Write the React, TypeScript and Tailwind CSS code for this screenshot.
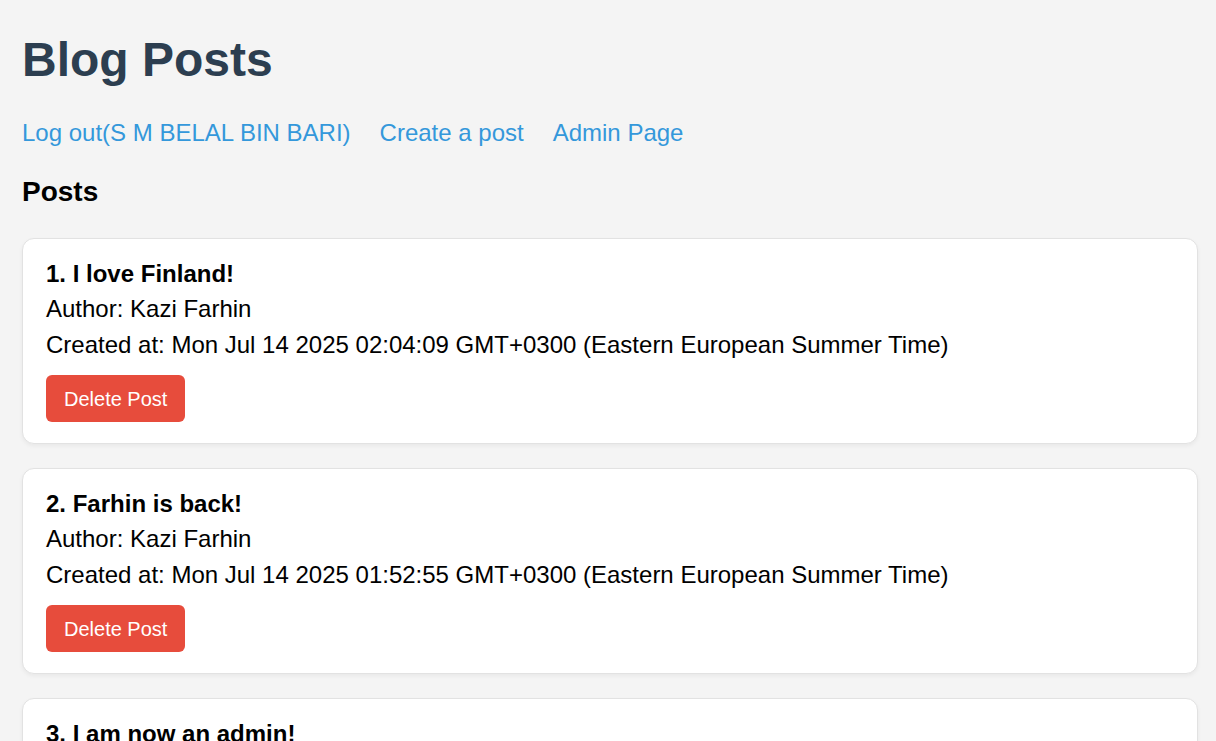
import React from "react";

const posts = [
  {
    id: 1,
    title: "I love Finland!",
    author: "Kazi Farhin",
    created: "Mon Jul 14 2025 02:04:09 GMT+0300 (Eastern European Summer Time)",
  },
  {
    id: 2,
    title: "Farhin is back!",
    author: "Kazi Farhin",
    created: "Mon Jul 14 2025 01:52:55 GMT+0300 (Eastern European Summer Time)",
  },
  {
    id: 3,
    title: "I am now an admin!",
    author: "S M Belal Bin Bari",
    created: "Mon Jul 14 2025 01:40:12 GMT+0300 (Eastern European Summer Time)",
  },
];

const PostCard = ({ post }: { post: (typeof posts)[number] }) => {
  return (
    <div className="bg-white border border-[#e2e2e2] rounded-xl shadow-[0_2px_4px_rgba(0,0,0,0.05)] pt-[18px] pb-[21px] px-[23px]">
      <h4 className="font-bold text-[24px] leading-[34px] text-black">
        {post.id}. {post.title}
      </h4>
      <p className="text-[24px] leading-[36px] text-black">Author: {post.author}</p>
      <p className="text-[24px] leading-[36px] text-black">Created at: {post.created}</p>
      <button className="mt-3 h-[47px] px-[18px] bg-[#e74c3c] text-white text-[20px] rounded-md">
        Delete Post
      </button>
    </div>
  );
};

const App = () => {
  return (
    <div className="h-screen overflow-hidden bg-[#f4f4f4] font-['Liberation_Sans',Arial,sans-serif]">
      <div className="pl-[22px] pr-[18px] pt-[31px]">
        {/* Header */}
        <h1 className="text-[48px] leading-[58px] font-bold text-[#2c3e50]">Blog Posts</h1>
        <nav className="mt-[26px] flex gap-[29px] text-[24px] leading-[36px] text-[#3498db]">
          <a href="#">Log out(S M BELAL BIN BARI)</a>
          <a href="#">Create a post</a>
          <a href="#">Admin Page</a>
        </nav>
        <h3 className="mt-[24px] text-[28px] leading-[34px] font-bold text-black">Posts</h3>

        {/* Post list */}
        <div className="mt-[29px] flex flex-col gap-6">
          {posts.map((post) => (
            <PostCard key={post.id} post={post} />
          ))}
        </div>
      </div>
    </div>
  );
};

export default App;
